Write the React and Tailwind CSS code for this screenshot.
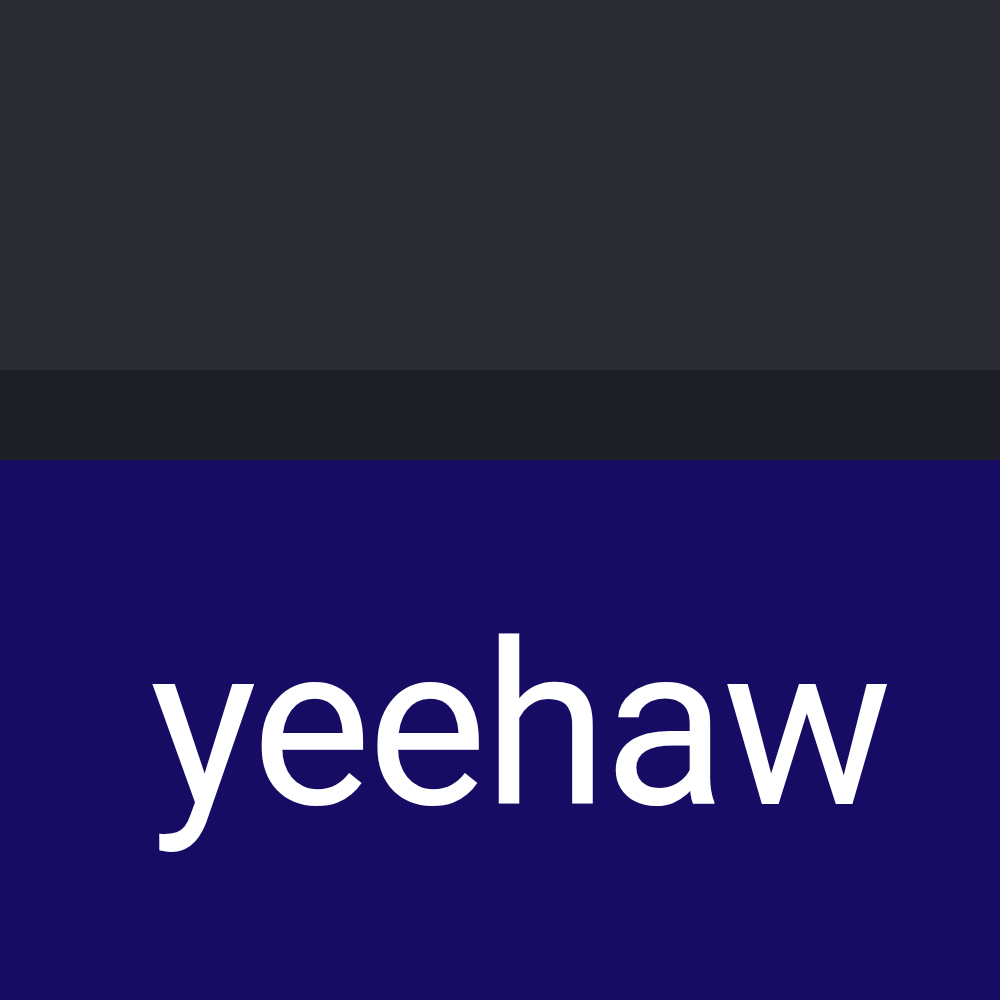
export default function App() {
  return (
    <div className="w-[1000px] h-[1000px] flex flex-col overflow-hidden" style={{ fontFamily: 'Roboto, "Noto Sans", sans-serif' }}>
      <div className="h-[370px] bg-[#2a2a33]" />
      <div className="h-[90px] bg-[#1e1f24]" />
      <div className="flex-1 bg-[#160c63] pl-[150px]">
        <div className="text-white text-[226px] leading-none tracking-[-4px] mt-[154px]">yeehaw</div>
      </div>
    </div>
  )
}
